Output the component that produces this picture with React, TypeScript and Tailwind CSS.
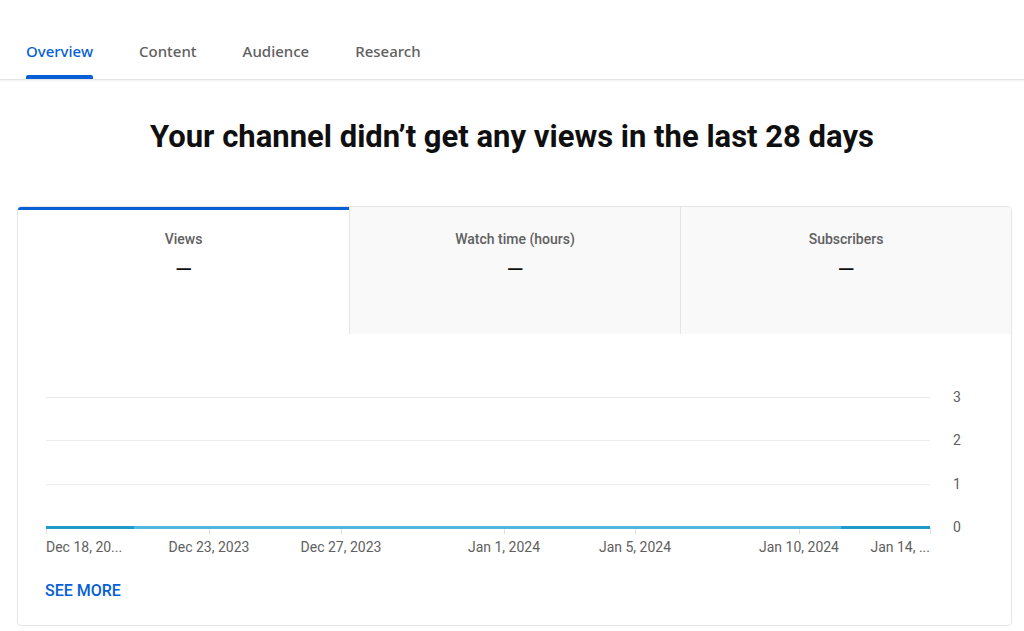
import React from 'react';

const tabs = ['Overview', 'Content', 'Audience', 'Research'];

const metrics = [
  { label: 'Views', active: true },
  { label: 'Watch time (hours)', active: false },
  { label: 'Subscribers', active: false },
];

// chart geometry in page coords, shifted into svg coords below
const ticks = [
  { x: 45, label: 'Dec 18, 20...', anchor: 'start' },
  { x: 208, label: 'Dec 23, 2023', anchor: 'middle' },
  { x: 340, label: 'Dec 27, 2023', anchor: 'middle' },
  { x: 503, label: 'Jan 1, 2024', anchor: 'middle' },
  { x: 634, label: 'Jan 5, 2024', anchor: 'middle' },
  { x: 798, label: 'Jan 10, 2024', anchor: 'middle' },
  { x: 929, label: 'Jan 14, ...', anchor: 'end' },
];

const gridY = [
  { y: 397, v: '3' },
  { y: 440, v: '2' },
  { y: 484, v: '1' },
];

function Chart() {
  // card starts at x=17, chart area starts at y=333
  const ox = 17;
  const oy = 334;
  return (
    <svg width="994" height="232" className="block" style={{ fontFamily: 'Roboto, sans-serif' }}>
      {gridY.map((g) => (
        <g key={g.v}>
          <line x1={45 - ox} x2={929 - ox} y1={g.y - oy + 0.5} y2={g.y - oy + 0.5} stroke="#ebebeb" strokeWidth="1" />
          <text x={956 - ox} y={g.y - oy + 5} fontSize="14" fill="#606060" textAnchor="middle">
            {g.v}
          </text>
        </g>
      ))}
      <text x={956 - ox} y={527 - oy + 5} fontSize="14" fill="#606060" textAnchor="middle">
        0
      </text>
      {ticks.map((t) => (
        <g key={t.label}>
          <line x1={t.x - ox + 0.5} x2={t.x - ox + 0.5} y1={527 - oy} y2={534 - oy} stroke="#e0e0e0" strokeWidth="1" />
          <text x={t.x - ox} y={552 - oy} fontSize="14" fill="#606060" textAnchor={t.anchor as 'start' | 'middle' | 'end'}>
            {t.label}
          </text>
        </g>
      ))}
      <line x1={45 - ox} x2={929 - ox} y1={527.5 - oy} y2={527.5 - oy} stroke="#52b7de" strokeWidth="3" />
      <line x1={45 - ox} x2={133 - ox} y1={527.5 - oy} y2={527.5 - oy} stroke="#1f9bcb" strokeWidth="3" />
      <line x1={840 - ox} x2={929 - ox} y1={527.5 - oy} y2={527.5 - oy} stroke="#1f9bcb" strokeWidth="3" />
    </svg>
  );
}

export default function App() {
  return (
    <div className="w-[1024px] h-[631px] bg-white overflow-hidden" style={{ fontFamily: 'Roboto, sans-serif' }}>
      {/* Top tabs */}
      <div className="h-[80px] flex items-end px-[26px] gap-[46px] border-b border-[#e5e5e5] shadow-[0_1px_2px_rgba(0,0,0,0.06)]">
        {tabs.map((t, i) => (
          <div key={t} className="flex flex-col items-center">
            <span
              className={`text-[15px] leading-[20px] font-medium ${i === 0 ? 'text-[#065fd4]' : 'text-[#606060]'}`}
              style={{ fontFamily: '"Noto Sans", sans-serif' }}
            >
              {t}
            </span>
            <div className={`mt-[14px] h-[4px] w-full rounded-t-[2px] ${i === 0 ? 'bg-[#065fd4]' : 'bg-transparent'}`} />
          </div>
        ))}
      </div>

      {/* Headline */}
      <h1 className="mt-[37px] text-center text-[31px] leading-[40px] font-bold text-[#0f0f0f]">
        Your channel didn’t get any views in the last 28 days
      </h1>

      {/* Card */}
      <div className="mt-[49px] ml-[17px] w-[995px] h-[420px] border border-[#e5e5e5] rounded-[4px] overflow-hidden flex flex-col">
        <div className="grid grid-cols-3 h-[127px]">
          {metrics.map((m, i) => (
            <div
              key={m.label}
              className={`flex flex-col items-center ${
                m.active ? 'bg-white border-t-[3px] border-[#065fd4]' : 'bg-[#f9f9f9] pt-[3px]'
              } ${i > 0 ? 'border-l border-l-[#e5e5e5]' : ''}`}
            >
              <span className="mt-[19px] text-[14px] leading-[20px] font-medium text-[#606060]">{m.label}</span>
              <span className="mt-[9px] text-[22px] leading-[24px] text-[#0f0f0f]">—</span>
            </div>
          ))}
        </div>
        <Chart />
        <div className="px-[27px] mt-[13px]">
          <button className="text-[16px] leading-[20px] font-medium text-[#065fd4] uppercase">See more</button>
        </div>
      </div>
    </div>
  );
}
